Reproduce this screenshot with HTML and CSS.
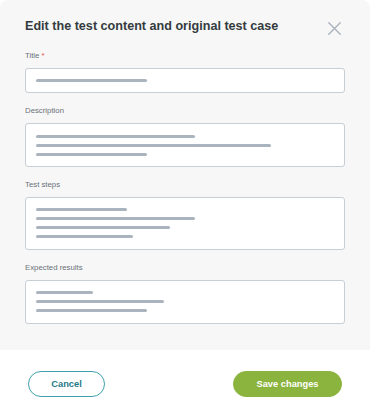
FILE: index.html
```html
<!DOCTYPE html>
<html>
<head>
<meta charset="utf-8">
<link rel="stylesheet" href="styles.css">
</head>
<body>
<div class="modal">
  <div class="panel">
    <div class="header">
      <h1 class="title">Edit the test content and original test case</h1>
      <svg class="close" width="13" height="13" viewBox="0 0 13 13" aria-label="Close">
        <path d="M0.8 0.8 L12.2 12.2 M12.2 0.8 L0.8 12.2" stroke="#a7b1bb" stroke-width="1.3" fill="none" stroke-linecap="round"/>
      </svg>
    </div>
    <div class="field first">
      <div class="label">Title <span class="req">*</span></div>
      <div class="box">
        <span class="line" style="width:111px"></span>
      </div>
    </div>
    <div class="field">
      <div class="label">Description</div>
      <div class="box">
        <span class="line" style="width:159px"></span>
        <span class="line" style="width:235px"></span>
        <span class="line" style="width:111px"></span>
      </div>
    </div>
    <div class="field">
      <div class="label">Test steps</div>
      <div class="box">
        <span class="line" style="width:91px"></span>
        <span class="line" style="width:159px"></span>
        <span class="line" style="width:134px"></span>
        <span class="line" style="width:97px"></span>
      </div>
    </div>
    <div class="field">
      <div class="label">Expected results</div>
      <div class="box">
        <span class="line" style="width:57px"></span>
        <span class="line" style="width:128px"></span>
        <span class="line" style="width:111px"></span>
      </div>
    </div>
  </div>
  <div class="footer">
    <button class="btn cancel">Cancel</button>
    <button class="btn save">Save changes</button>
  </div>
</div>
</body>
</html>
```
FILE: styles.css
```css
html, body {
  margin: 0;
  padding: 0;
  background: #ffffff;
  font-family: "Liberation Sans", Arial, sans-serif;
}
.modal {
  width: 370px;
}
.panel {
  background: #f7f7f7;
  border-radius: 8px 8px 0 0;
  padding: 18px 25px 26px 25px;
}
.header {
  display: flex;
  justify-content: space-between;
  align-items: flex-start;
}
.title {
  margin: 0;
  font-size: 12.6px;
  line-height: 16px;
  font-weight: bold;
  color: #343b3e;
}
.close {
  display: block;
  margin-top: 3.5px;
  margin-right: 4px;
}
.field {
  margin-top: 13.5px;
}
.field.first {
  margin-top: 16px;
}
.label {
  font-size: 7.8px;
  line-height: 10px;
  color: #6a7277;
  margin-bottom: 7px;
}
.req {
  color: #e2473f;
}
.box {
  background: #ffffff;
  border: 1px solid #c7ced5;
  border-radius: 3px;
  padding: 10.2px 10px;
  display: flex;
  flex-direction: column;
  gap: 6px;
}
.line {
  display: block;
  height: 3px;
  border-radius: 2px;
  background: #a9b4be;
}
.footer {
  display: flex;
  justify-content: space-between;
  padding: 21px 28px 0 28px;
}
.btn {
  font-family: "Liberation Sans", Arial, sans-serif;
  font-weight: bold;
  font-size: 9.3px;
  height: 26px;
  border-radius: 13px;
  padding: 0;
  cursor: pointer;
}
.cancel {
  width: 77px;
  background: #ffffff;
  border: 1px solid #3fa1ae;
  color: #1f7b88;
}
.save {
  width: 109px;
  background: #8bb43e;
  border: 1px solid #8bb43e;
  color: #ffffff;
}
```
